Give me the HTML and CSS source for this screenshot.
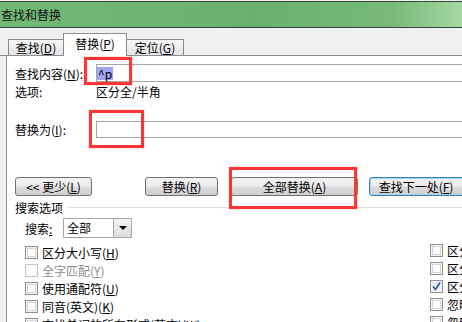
FILE: index.html
```html
<!DOCTYPE html>
<html>
<head>
  <title>查找和替换</title>
  <link rel="stylesheet" href="styles.css">
</head>
<body>
  <div class="window">
    <div class="titlebar">查找和替换</div>
    <div class="tabstrip">
      <div class="tab tab-find">查找(<u>D</u>)</div>
      <div class="tab tab-replace active">替换(<u>P</u>)</div>
      <div class="tab tab-goto">定位(<u>G</u>)</div>
    </div>
    <div class="page">
      <div class="field-row find-row">
        <span class="label">查找内容(<u>N</u>):</span>
        <div class="input"><span class="sel">^p</span></div>
      </div>
      <div class="option-row">
        <span class="label">选项:</span>
        <span>区分全/半角</span>
      </div>
      <div class="field-row replace-row">
        <span class="label">替换为(<u>I</u>):</span>
        <div class="input"></div>
      </div>
      <div class="buttons">
        <button class="btn btn-less">&lt;&lt; 更少(<u>L</u>)</button>
        <button class="btn btn-replace">替换(<u>R</u>)</button>
        <button class="btn btn-all">全部替换(<u>A</u>)</button>
        <button class="btn btn-next">查找下一处(<u>F</u>)</button>
      </div>
      <div class="group-title">
        <span>搜索选项</span>
        <span class="rule"></span>
      </div>
      <div class="search-row">
        <span class="search-label">搜索<u>:</u></span>
        <div class="combo">
          <span class="combo-text">全部</span>
          <span class="combo-btn"><span class="arrow"></span></span>
        </div>
      </div>
      <div class="options">
        <div class="col col-left">
          <div class="check"><span class="box"></span>区分大小写(<u>H</u>)</div>
          <div class="check disabled"><span class="box"></span>全字匹配(<u>Y</u>)</div>
          <div class="check"><span class="box"></span>使用通配符(<u>U</u>)</div>
          <div class="check"><span class="box"></span>同音(英文)(<u>K</u>)</div>
          <div class="check"><span class="box"></span>查找单词的所有形式(英文)(<u>W</u>)</div>
        </div>
        <div class="col col-right">
          <div class="check"><span class="box"></span>区分前缀(<u>X</u>)</div>
          <div class="check"><span class="box"></span>区分后缀(<u>T</u>)</div>
          <div class="check"><span class="box checked"><svg width="11" height="11" viewBox="0 0 11 11"><path d="M2 5.5 L4.5 8.5 L9 1.5" fill="none" stroke="#2f4fa8" stroke-width="1.6"/></svg></span>区分全/半角(<u>M</u>)</div>
          <div class="check"><span class="box"></span>忽略标点符号(<u>S</u>)</div>
          <div class="check"><span class="box"></span>忽略空格(<u>W</u>)</div>
        </div>
      </div>
    </div>

    <div class="mark mark-find"></div>
    <div class="mark mark-replace"></div>
    <div class="mark mark-all"></div>
  </div>
</body>
</html>
```

FILE: styles.css
```css
body {
  margin: 0;
  width: 462px;
  height: 322px;
  overflow: hidden;
  background: #f0f0f0;
  font-family: "Noto Sans CJK SC", "Liberation Sans", sans-serif;
  font-size: 12px;
  color: #000;
}

u {
  text-decoration: underline;
}

.window {
  position: relative;
  width: 462px;
  height: 322px;
  overflow: hidden;
}

/* title bar */
.titlebar {
  height: 25px;
  border-top: 1px solid #2f4a3a;
  border-bottom: 1px solid #2d4a34;
  margin-top: 1px;
  padding-left: 1px;
  line-height: 25px;
  color: #111;
  background: linear-gradient(to right, #72b976 0%, #6bb06f 55%, #78b97b 85%, #a6d8a3 100%);
}

/* tabs */
.tabstrip {
  height: 27px;
  display: flex;
  align-items: flex-end;
  padding-left: 8px;
  border-bottom: 1px solid #898c95;
  background: #f0f0f0;
}

.tab {
  height: 16px;
  box-sizing: border-box;
  white-space: nowrap;
  text-align: center;
  line-height: 15px;
  border: 1px solid #898c95;
  border-bottom: none;
  background: linear-gradient(#f7f7f7, #e3e3e3);
}

.tab-find {
  width: 56px;
}

.tab-replace {
  width: 64px;
  margin-left: -1px;
}

.tab-goto {
  width: 58px;
  margin-left: -1px;
}

.tab.active {
  position: relative;
  z-index: 1;
  height: 23px;
  margin-bottom: -1px;
  line-height: 20px;
  background: #fff;
}

/* tab page */
.page {
  margin-left: 6px;
  border-left: 1px solid #898c95;
  background: #fff;
  height: 266px;
  padding: 8px 0 0 8px;
}

.field-row {
  display: flex;
  align-items: center;
}

.label {
  width: 81px;
  flex: none;
  white-space: nowrap;
}

.find-row {
  height: 18px;
}

.replace-row {
  height: 18px;
  margin-top: 20px;
}

.input {
  width: 380px;
  height: 18px;
  box-sizing: border-box;
  border: 1px solid #a5a6ad;
  padding: 2px 0 0 0;
  line-height: 13px;
  flex: none;
}

.replace-row .input {
  height: 17px;
}

.sel {
  display: inline-block;
  background: #a3a3f5;
  height: 13px;
  padding: 0 1px;
  line-height: 13px;
}

.option-row {
  display: flex;
  height: 16px;
  line-height: 16px;
  margin-top: 2px;
}

/* buttons */
.buttons {
  display: flex;
  margin-top: 39px;
  height: 19px;
}

.btn {
  height: 19px;
  box-sizing: border-box;
  border: 1px solid #707070;
  border-radius: 3px;
  background: linear-gradient(#f3f3f3 0%, #ececec 48%, #dddddd 52%, #cfcfcf 100%);
  font-family: inherit;
  font-size: 12px;
  line-height: 15px;
  padding: 0;
  color: #000;
  flex: none;
  white-space: nowrap;
}

.btn-less {
  width: 77px;
}

.btn-replace {
  width: 73px;
  margin-left: 53px;
}

.btn-all {
  width: 127px;
  margin-left: 13px;
}

.btn-next {
  width: 100px;
  margin-left: 11px;
  padding-right: 6px;
  border-color: #3c7fb1;
  box-shadow: inset 0 0 0 1px #9fd5f7;
}

/* search options */
.group-title {
  display: flex;
  align-items: center;
  height: 18px;
  margin-top: 2px;
}

.rule {
  flex: 1;
  height: 1px;
  margin-left: 5px;
  background: #d5dfe5;
}

.search-row {
  display: flex;
  align-items: center;
  margin-top: 2px;
  padding-left: 10px;
  height: 20px;
}

.search-label {
  width: 38px;
}

.combo {
  display: flex;
  width: 69px;
  height: 20px;
  box-sizing: border-box;
  border: 1px solid #a5a6ad;
}

.combo-text {
  flex: 1;
  padding-left: 3px;
  line-height: 18px;
}

.combo-btn {
  width: 17px;
  border-left: 1px solid #a5a6ad;
  background: linear-gradient(#f4f4f4, #dcdcdc);
  display: flex;
  align-items: center;
  justify-content: center;
}

.arrow {
  width: 0;
  height: 0;
  border-left: 4px solid transparent;
  border-right: 4px solid transparent;
  border-top: 4px solid #000;
}

.options {
  display: grid;
  grid-template-columns: 405px 1fr;
  padding-left: 10px;
  margin-top: 5px;
}

.col-right {
  margin-top: -2px;
}

.check {
  display: flex;
  align-items: center;
  height: 18px;
  white-space: nowrap;
}

.box {
  width: 13px;
  height: 13px;
  box-sizing: border-box;
  border: 1px solid #8f8f8f;
  margin-right: 4px;
  flex: none;
  background: #fff;
  box-shadow: inset 0 0 0 1px #f4f4f4, inset 0 0 0 2px #d4d4d4;
  display: flex;
  align-items: center;
  justify-content: center;
}

.box.checked {
  box-shadow: inset 0 0 0 1px #f4f4f4;
  background: linear-gradient(#e4e4e4, #f8f8f8);
}

.check.disabled {
  color: #8d8d8d;
}

.check.disabled .box {
  border-color: #c5c5c5;
  box-shadow: inset 0 0 0 1px #fafafa;
}

/* red annotation boxes drawn over the dialog */
.mark {
  position: absolute;
  border: 3px solid #ff3535;
  box-shadow: 0 0 1px #ff7070;
}

.mark-find {
  left: 84px;
  top: 57px;
  width: 42px;
  height: 22px;
}

.mark-replace {
  left: 89px;
  top: 110px;
  width: 49px;
  height: 32px;
}

.mark-all {
  left: 229px;
  top: 167px;
  width: 122px;
  height: 36px;
}
```
